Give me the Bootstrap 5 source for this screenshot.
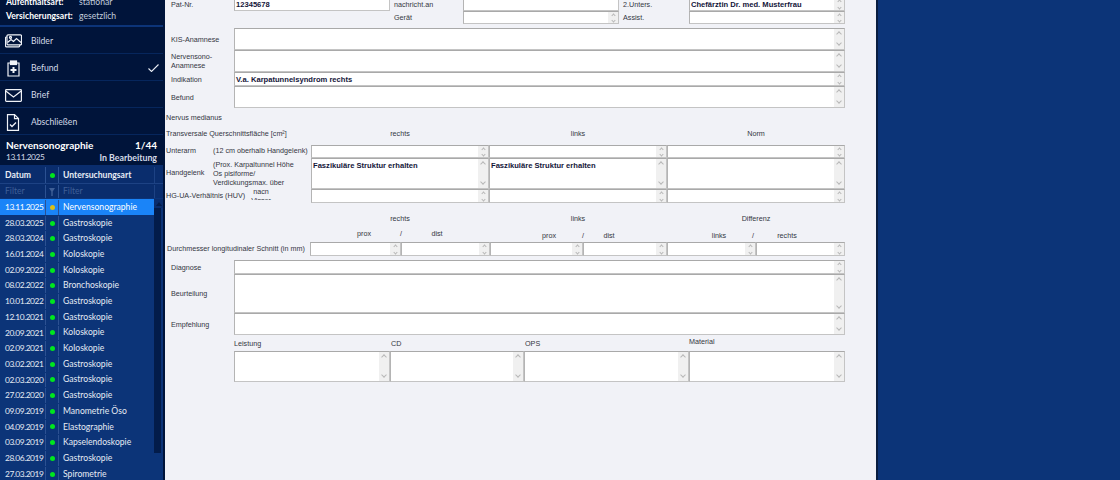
<!DOCTYPE html>
<html lang="de">
<head>
<meta charset="UTF-8" />
<title>Nervensonographie Befund</title>
<link href="https://cdn.jsdelivr.net/npm/bootstrap@5.3.3/dist/css/bootstrap.min.css" rel="stylesheet" />
<style>
  html, body { height: 100%; overflow: hidden; background: #0c3478; }
  .app { height: 480px; }
  /* sidebar */
  .side { width: 165px; background: #00143a; color: #e8edf5; font-family: Lato, "Open Sans", "Liberation Sans", sans-serif; font-size: 8.6px; }
  .side > * { flex-shrink: 0; }
  .info { height: 26px; margin-top: -5px; padding: 0 6px; box-sizing: content-box; }
  .info-row { height: 14px; line-height: 14px; }
  .info-key { width: 73px; color: #fff; font-weight: 700; }
  .info-val { color: #c4cede; }
  .sep-top { height: 2px; width: 163px; background: #0c3478; margin-top: 4px; }
  .act { height: 27px; width: 163px; border-bottom: 1px solid #06265c; padding: 2px 4px 0 5px; }
  .act-ico { width: 26px; }
  .act-lbl { color: #d4dbe8; }
  .exam { height: 30px; padding: 4px 6px 0; width: 163px; }
  .exam-title { font-size: 10px; font-weight: 700; color: #fff; line-height: 13px; }
  .exam-sub { font-size: 8.8px; line-height: 11px; color: #d4dbe8; }
  .dt { font-size: 8.4px; letter-spacing: -.45px; }
  .grid-wrap { width: 163px; background: #0c3478; }
  .grid-head { height: 19px; padding-top: 2px; background: #0a2d6d; color: #e8edf5; font-weight: 700; border-bottom: 1px solid #1d4284; }
  .grid-filter { height: 15px; padding-top: 1px; background: #0a2d6d; color: #3f5f97; border-bottom: 1px solid #0c3478; }
  .c-date { width: 46px; padding-left: 5px; border-right: 1px solid #2c5192; }
  .c-dot { width: 13px; border-right: 1px solid #2c5192; }
  .c-name { width: 95px; padding-left: 4px; }
  .c-pad { width: 9px; border-left: 1px solid #1d4284; }
  .dot { width: 5px; height: 5px; border-radius: 50%; background: #00e61e; }
  .dot-y { background: #d9bf19; }
  .lst-row { height: 15.7px; padding-top: 1px; color: #e6ebf4; }
  .lst-on { background: #1a84f8; color: #fff; }
  .sb { width: 9px; }
  .sb-btn { height: 9px; background: #0a2d6d; }
  .sb-tri { width: 0; height: 0; border-left: 3px solid transparent; border-right: 3px solid transparent; border-bottom: 4px solid #031c4a; }
  .sb-track { width: 7px; height: 245px; background: #031c4a; }
  /* form */
  .frm { width: 711px; background: #f1f2f7; color: #33363f; font-family: "Liberation Sans", Arial, sans-serif; font-size: 7.2px; }
  .frm-in { margin-top: -3px; }
  .g { display: grid; }
  .g-top { grid-template-columns: 69px 156px 73px 156px 70px 156px; }
  .g-wide { grid-template-columns: 69px 611px; }
  .g-tri { grid-template-columns: 146px 178px 178px 178px; }
  .g-six { grid-template-columns: 145px 91px 89px 93px 84px 89px 89px; }
  .g-sub { grid-template-columns: 179px 40px 34px 38px 73px 40px 28px 24px 78px 40px 28px 40px; }
  .g-bot { grid-template-columns: 69px 156px 134px 165px 156px; }
  .h14 { height: 14px; }
  .h13 { height: 13px; }
  .h22 { height: 22px; }
  .h31 { height: 31px; }
  .h39 { height: 39px; }
  .lab { padding-left: 6px; display: flex; align-items: center; line-height: 9px; }
  .lab-near { padding-left: 4px; }
  .lab-tight { padding-left: 1px; display: flex; align-items: center; white-space: nowrap; }
  .lab-zero { padding-left: 0; }
  .mt-1px { margin-top: 1px; }
  .mt-2px { margin-top: 2px; }
  .mt-3px { margin-top: 3px; }
  .mt-4px { margin-top: 4px; }
  .mt-9px { margin-top: 9px; }
  .ctr { text-align: center; line-height: 14px; }
  .low { position: relative; top: 2px; }
  .up2 { position: relative; top: -2px; }
  .fld { background: #fff; border: 1px solid #c4c4c4; border-top-color: #a9a9a9; border-left-color: #b4b4b4; display: flex; overflow: hidden; min-width: 0; }
  .fld-txt { flex: 1; padding: 1px 0 0 1px; font-weight: 700; color: #14163a; line-height: 11px; font-size: 7.6px; white-space: nowrap; overflow: hidden; }
  .spn { width: 10px; flex: none; background: #f0f0f0; display: flex; flex-direction: column; justify-content: space-between; align-items: center; padding: 3px 0 2px; }
  .spn i { display: block; width: 4px; height: 4px; border-left: 1px solid #b8b8b8; border-top: 1px solid #b8b8b8; transform: rotate(45deg); }
  .spn i + i { transform: rotate(225deg); margin-bottom: 2px; }
  .h13 .spn, .h14 .spn { padding: 2px 0 0; }
  .h13 .spn i, .h14 .spn i { width: 3px; height: 3px; }
  .h13 .spn i + i, .h14 .spn i + i { margin-bottom: 1px; }
  .arm { display: flex; align-items: center; padding-left: 1px; white-space: nowrap; }
  .lab-dm { padding-left: 2px; }
  .arm-key { width: 47px; flex: none; }
  .note { line-height: 9px; white-space: nowrap; }
  .clip { position: relative; overflow: hidden; height: 10px; width: 24px; margin-left: 4px; line-height: 9px; text-align: center; align-self: flex-start; top: 1px; }
  .clip-in { margin-top: -3.5px; }
  .edge { width: 2px; background: #0a1e40; }
  .rest { flex: 1; background: #0c3478; }
</style>
</head>
<body>
<div class="app d-flex overflow-hidden">
  <div class="side d-flex flex-column flex-shrink-0">
    <div class="info">
      <div class="info-row d-flex"><span class="info-key">Aufenthaltsart:</span><span class="info-val">stationär</span></div>
      <div class="info-row d-flex"><span class="info-key">Versicherungsart:</span><span class="info-val">gesetzlich</span></div>
    </div>
    <div class="sep-top"></div>
    <div class="act d-flex align-items-center">
      <span class="act-ico d-flex"><svg width="17" height="14" viewBox="0 0 17 14" fill="none" stroke="#f0f3f8" stroke-width="1.2"><path d="M3 .8h12.5a1 1 0 0 1 1 1v8a1 1 0 0 1-1 1H3a1 1 0 0 1-1-1v-8a1 1 0 0 1 1-1z" fill="#00143a"/><path d="M2 3H1.3a.8.8 0 0 0-.8.8v8a1 1 0 0 0 1 1h12.2a1 1 0 0 0 1-1v-1"/><path d="M2.5 8.5l3.5-3 2.5 2 3-3 4.5 4" /><circle cx="5.5" cy="3.4" r="1"/></svg></span>
      <span class="act-lbl">Bilder</span>
    </div>
    <div class="act d-flex align-items-center">
      <span class="act-ico d-flex"><svg width="17" height="17" viewBox="0 0 17 17" fill="none" stroke="#f0f3f8" stroke-width="1.2"><path d="M5 3H3v13h11V3h-2"/><rect x="5.5" y="1" width="6" height="3.5" fill="#f0f3f8"/><path d="M8.5 7v6M5.5 10h6" stroke-width="2"/></svg></span>
      <span class="act-lbl flex-grow-1">Befund</span>
      <svg width="11" height="8" viewBox="0 0 11 8" fill="none" stroke="#e8edf5" stroke-width="1.1"><path d="M.5 4.5l3 3L10.5.5"/></svg>
    </div>
    <div class="act d-flex align-items-center">
      <span class="act-ico d-flex"><svg width="17" height="13" viewBox="0 0 17 13" fill="none" stroke="#f0f3f8" stroke-width="1.2"><rect x=".6" y=".6" width="15.8" height="11.8" rx=".8"/><path d="M.8 2l7.7 6 7.7-6"/></svg></span>
      <span class="act-lbl">Brief</span>
    </div>
    <div class="act d-flex align-items-center">
      <span class="act-ico d-flex"><svg width="17" height="17" viewBox="0 0 17 17" fill="none" stroke="#f0f3f8" stroke-width="1.2"><path d="M2.5.6h7l4 4v11.8h-11z"/><path d="M9.5.6v4h4"/><path d="M5 10.5l2 2 4-4" stroke-width="1.3"/></svg></span>
      <span class="act-lbl">Abschließen</span>
    </div>
    <div class="exam">
      <div class="d-flex justify-content-between"><span class="exam-title">Nervensonographie</span><span class="exam-title">1/44</span></div>
      <div class="d-flex justify-content-between"><span class="exam-sub dt">13.11.2025</span><span class="exam-sub fw-bold">In Bearbeitung</span></div>
    </div>
    <div class="grid-wrap flex-grow-1 overflow-hidden">
      <div class="grid-head d-flex align-items-stretch">
        <div class="c-date d-flex align-items-center">Datum</div>
        <div class="c-dot d-flex align-items-center justify-content-center"><span class="dot"></span></div>
        <div class="c-name d-flex align-items-center">Untersuchungsart</div>
        <div class="c-pad"></div>
      </div>
      <div class="grid-filter d-flex align-items-stretch">
        <div class="c-date d-flex align-items-center">Filter</div>
        <div class="c-dot d-flex align-items-center justify-content-center"><svg width="6" height="8" viewBox="0 0 6 8" fill="#3f5f97"><path d="M0 0h6L3.7 3.5V8H2.3V3.5z"/></svg></div>
        <div class="c-name d-flex align-items-center">Filter</div>
        <div class="c-pad"></div>
      </div>
      <div class="d-flex">
        <div class="flex-grow-1" id="lst"></div>
        <div class="sb flex-shrink-0">
          <div class="sb-btn d-flex align-items-center justify-content-center"><span class="sb-tri"></span></div>
          <div class="sb-track"></div>
        </div>
      </div>
    </div>
  </div>

  <div class="frm flex-shrink-0 overflow-hidden">
    <div class="frm-in">
      <div class="g g-top h14">
        <div class="lab">Pat-Nr.</div>
        <div class="fld"><div class="fld-txt">12345678</div></div>
        <div class="lab lab-near">nachricht.an</div>
        <div class="fld"></div>
        <div class="lab lab-near">2.Unters.</div>
        <div class="fld"><div class="fld-txt">Chefärztin Dr. med. Musterfrau</div><span class="spn"><i></i><i></i></span></div>
      </div>
      <div class="g g-top h13">
        <div></div><div></div>
        <div class="lab lab-near">Gerät</div>
        <div class="fld"><div class="fld-txt"></div><span class="spn"><i></i><i></i></span></div>
        <div class="lab lab-near">Assist.</div>
        <div class="fld"><div class="fld-txt"></div><span class="spn"><i></i><i></i></span></div>
      </div>

      <div class="g g-wide h22 mt-4px"><div class="lab">KIS-Anamnese</div><div class="fld"><div class="fld-txt"></div><span class="spn"><i></i><i></i></span></div></div>
      <div class="g g-wide h22"><div class="lab">Nervensono-<br />Anamnese</div><div class="fld"><div class="fld-txt"></div><span class="spn"><i></i><i></i></span></div></div>
      <div class="g g-wide h14"><div class="lab">Indikation</div><div class="fld"><div class="fld-txt">V.a. Karpatunnelsyndrom rechts</div><span class="spn"><i></i><i></i></span></div></div>
      <div class="g g-wide h22"><div class="lab">Befund</div><div class="fld"><div class="fld-txt"></div><span class="spn"><i></i><i></i></span></div></div>

      <div class="h14 lab-tight mt-3px">Nervus medianus</div>
      <div class="g g-tri h14 mt-2px">
        <div class="lab-tight">Transversale Querschnittsfläche [cm²]</div>
        <div class="ctr">rechts</div><div class="ctr">links</div><div class="ctr">Norm</div>
      </div>

      <div class="g g-tri h13 mt-4px">
        <div class="arm"><span class="arm-key">Unterarm</span><span>(12 cm oberhalb Handgelenk)</span></div>
        <div class="fld"><div class="fld-txt"></div><span class="spn"><i></i><i></i></span></div>
        <div class="fld"><div class="fld-txt"></div><span class="spn"><i></i><i></i></span></div>
        <div class="fld"><div class="fld-txt"></div><span class="spn"><i></i><i></i></span></div>
      </div>
      <div class="g g-tri h31">
        <div class="arm"><span class="arm-key">Handgelenk</span><span class="note">(Prox. Karpaltunnel Höhe<br />Os pisiforme/<br />Verdickungsmax. über</span></div>
        <div class="fld"><div class="fld-txt">Faszikuläre Struktur erhalten</div><span class="spn"><i></i><i></i></span></div>
        <div class="fld"><div class="fld-txt">Faszikuläre Struktur erhalten</div><span class="spn"><i></i><i></i></span></div>
        <div class="fld"><div class="fld-txt"></div><span class="spn"><i></i><i></i></span></div>
      </div>
      <div class="g g-tri h14">
        <div class="arm">HG-UA-Verhältnis (HUV)<div class="clip"><div class="clip-in">nach<br />Visser</div></div></div>
        <div class="fld"><div class="fld-txt"></div><span class="spn"><i></i><i></i></span></div>
        <div class="fld"><div class="fld-txt"></div><span class="spn"><i></i><i></i></span></div>
        <div class="fld"><div class="fld-txt"></div><span class="spn"><i></i><i></i></span></div>
      </div>

      <div class="g g-tri h14 mt-9px">
        <div></div><div class="ctr">rechts</div><div class="ctr">links</div><div class="ctr">Differenz</div>
      </div>
      <div class="g g-sub h14 ctr mt-1px">
        <div></div><div>prox</div><div>/</div><div>dist</div><div></div>
        <div class="low">prox</div><div class="low">/</div><div class="low">dist</div><div></div>
        <div class="low">links</div><div class="low">/</div><div class="low">rechts</div>
      </div>
      <div class="g g-six h14 mt-1px">
        <div class="arm lab-dm">Durchmesser longitudinaler Schnitt (in mm)</div>
        <div class="fld"><div class="fld-txt"></div><span class="spn"><i></i><i></i></span></div>
        <div class="fld"><div class="fld-txt"></div><span class="spn"><i></i><i></i></span></div>
        <div class="fld"><div class="fld-txt"></div><span class="spn"><i></i><i></i></span></div>
        <div class="fld"><div class="fld-txt"></div><span class="spn"><i></i><i></i></span></div>
        <div class="fld"><div class="fld-txt"></div><span class="spn"><i></i><i></i></span></div>
        <div class="fld"><div class="fld-txt"></div><span class="spn"><i></i><i></i></span></div>
      </div>

      <div class="g g-wide h14 mt-4px"><div class="lab">Diagnose</div><div class="fld"><div class="fld-txt"></div><span class="spn"><i></i><i></i></span></div></div>
      <div class="g g-wide h39"><div class="lab">Beurteilung</div><div class="fld"><div class="fld-txt"></div><span class="spn"><i></i><i></i></span></div></div>
      <div class="g g-wide h22"><div class="lab">Empfehlung</div><div class="fld"><div class="fld-txt"></div><span class="spn"><i></i><i></i></span></div></div>

      <div class="g g-bot h13 mt-3px">
        <div></div><div class="lab-tight lab-zero">Leistung</div><div class="lab-tight">CD</div><div class="lab-tight">OPS</div><div class="lab-tight lab-zero up2">Material</div>
      </div>
      <div class="g g-bot h31">
        <div></div>
        <div class="fld"><div class="fld-txt"></div><span class="spn"><i></i><i></i></span></div>
        <div class="fld"><div class="fld-txt"></div><span class="spn"><i></i><i></i></span></div>
        <div class="fld"><div class="fld-txt"></div><span class="spn"><i></i><i></i></span></div>
        <div class="fld"><div class="fld-txt"></div><span class="spn"><i></i><i></i></span></div>
      </div>
    </div>
  </div>
  <div class="edge flex-shrink-0"></div>
  <div class="rest"></div>
</div>

<script>
  // exam history shown in the left grid
  const exams = [
    ["13.11.2025", "Nervensonographie"], ["28.03.2025", "Gastroskopie"], ["28.03.2024", "Gastroskopie"],
    ["16.01.2024", "Koloskopie"], ["02.09.2022", "Koloskopie"], ["08.02.2022", "Bronchoskopie"],
    ["10.01.2022", "Gastroskopie"], ["12.10.2021", "Gastroskopie"], ["20.09.2021", "Koloskopie"],
    ["02.09.2021", "Koloskopie"], ["03.02.2021", "Gastroskopie"], ["02.03.2020", "Gastroskopie"],
    ["27.02.2020", "Gastroskopie"], ["09.09.2019", "Manometrie Öso"], ["04.09.2019", "Elastographie"],
    ["03.09.2019", "Kapselendoskopie"], ["28.06.2019", "Gastroskopie"], ["27.03.2019", "Spirometrie"]
  ];
  let html = "";
  exams.forEach((e, i) => {
    html += `<div class="lst-row d-flex align-items-stretch ${i === 0 ? "lst-on" : ""}">
      <div class="c-date d-flex align-items-center dt">${e[0]}</div>
      <div class="c-dot d-flex align-items-center justify-content-center"><span class="dot ${i === 0 ? "dot-y" : ""}"></span></div>
      <div class="c-name d-flex align-items-center">${e[1]}</div>
    </div>`;
  });
  document.getElementById("lst").innerHTML = html;
</script>
<script src="https://cdn.jsdelivr.net/npm/bootstrap@5.3.3/dist/js/bootstrap.bundle.min.js"></script>
</body>
</html>
